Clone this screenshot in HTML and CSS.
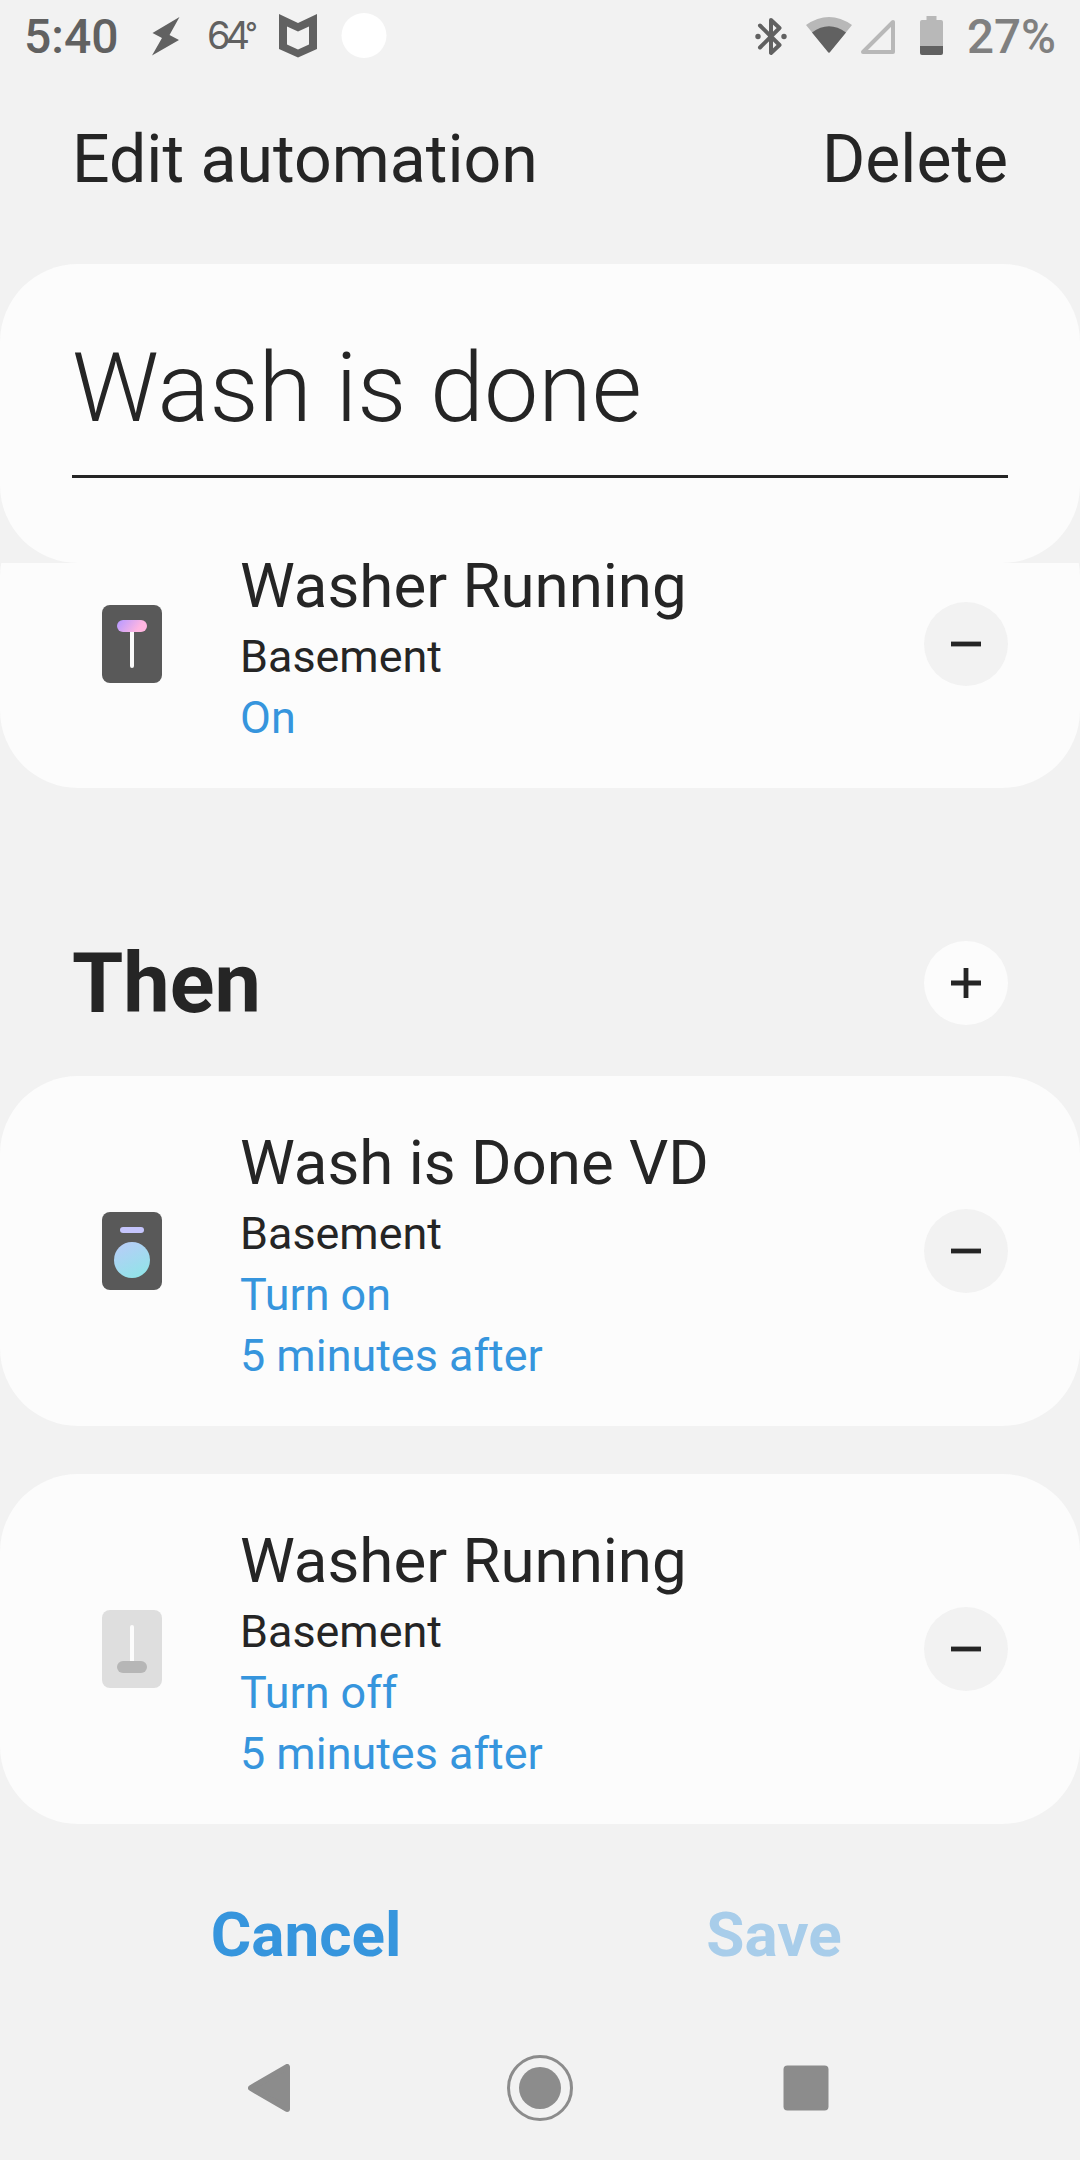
FILE: index.html
```html
<!DOCTYPE html>
<html lang="en">
<head>
    <meta charset="UTF-8">
    <meta name="viewport" content="width=device-width, initial-scale=1.0">
    <title>Edit automation</title>
    <link rel="stylesheet" href="styles.css">
</head>
<body>
    <div class="status-bar">
        <div class="status-left">
            <span class="time">5:40</span>
            <svg class="bolt" width="30" height="72" viewBox="0 0 30 72">
                <path d="M28.5 17 L1.5 33 L11 38 L1 55.500 L28 40 L18.500 35 Z" fill="#616161"/>
            </svg>
            <span class="temp">64<span class="degree">°</span></span>
            <svg class="shield" width="38" height="72" viewBox="0 0 38 72">
                <path fill-rule="evenodd" fill="#616161" d="M0 14 L19 23 L38 14 V49 L19 57.500 L0 49 Z M8 26.500 V44.500 L19 49.500 L30 44.500 V26.500 L19 31.500 Z"/>
            </svg>
            <svg class="dot" width="46" height="72" viewBox="0 0 46 72">
                <circle cx="23" cy="35.500" r="22.500" fill="#fff"/>
            </svg>
        </div>
        <div class="status-right">
            <svg class="bluetooth" width="32" height="72" viewBox="0 0 32 72">
                <path d="M5 25.500 L24.500 45 L16 53 V20 L24.500 28 L5 47.500" fill="none" stroke="#616161" stroke-width="4" stroke-linejoin="round" stroke-linecap="round"/>
                <circle cx="3" cy="36.500" r="2.700" fill="#616161"/>
                <circle cx="29" cy="36.500" r="2.700" fill="#616161"/>
            </svg>
            <svg class="wifi" width="46" height="72" viewBox="0 0 46 72">
                <path d="M0 25 Q23 9 46 25 L24 52 Q23 53.500 22 52 Z" fill="#b8b8b8"/>
                <path d="M6 32.500 Q23 20 40 32.500 L24 52 Q23 53.500 22 52 Z" fill="#616161"/>
            </svg>
            <svg class="signal" width="34" height="72" viewBox="0 0 34 72">
                <path d="M32 22 V52 H2 Z" fill="none" stroke="#b8b8b8" stroke-width="4" stroke-linejoin="round"/>
            </svg>
            <svg class="battery" width="23" height="72" viewBox="0 0 23 72">
                <path d="M6.500 16 H16.500 V20 H21 Q23 20 23 22 V46 H0 V22 Q0 20 2 20 H6.500 Z" fill="#b8b8b8"/>
                <path d="M0 46 H23 V53 Q23 55 21 55 H2 Q0 55 0 53 Z" fill="#616161"/>
            </svg>
            <span class="percent">27%</span>
        </div>
    </div>

    <header>
        <h1>Edit automation</h1>
        <a href="#">Delete</a>
    </header>

    <div class="name-card">
        <div class="name-field">Wash is done</div>
    </div>

    <main>
        <div class="card card-if">
            <svg class="device-icon" width="60" height="78" viewBox="0 0 60 78">
                <defs>
                    <linearGradient id="pink" x1="0" y1="0" x2="1" y2="0.3">
                        <stop offset="0.1" stop-color="#bd9cff"/>
                        <stop offset="0.85" stop-color="#ffb6e1"/>
                    </linearGradient>
                </defs>
                <rect width="60" height="78" rx="8" fill="#595959"/>
                <rect x="28" y="24" width="4" height="39" rx="2" fill="#fafafa"/>
                <rect x="15" y="15" width="30" height="12" rx="6" fill="url(#pink)"/>
            </svg>
            <div class="details">
                <h3>Washer Running</h3>
                <p>Basement</p>
                <p class="action">On</p>
            </div>
            <button class="round-button">
                <svg width="30" height="30" viewBox="0 0 30 30"><path d="M0 15 H30" stroke="#252525" stroke-width="4.800"/></svg>
            </button>
        </div>

        <div class="section-title">
            <h2>Then</h2>
            <button class="round-button add">
                <svg width="30" height="30" viewBox="0 0 30 30"><path d="M0 15 H30 M15 0 V30" stroke="#252525" stroke-width="4.800"/></svg>
            </button>
        </div>

        <div class="card">
            <svg class="device-icon" width="60" height="78" viewBox="0 0 60 78">
                <defs>
                    <linearGradient id="aqua" x1="0.2" y1="0" x2="0.7" y2="1">
                        <stop offset="0" stop-color="#b8cdf8"/>
                        <stop offset="1" stop-color="#91e4e8"/>
                    </linearGradient>
                </defs>
                <rect width="60" height="78" rx="8" fill="#595959"/>
                <rect x="18" y="15" width="24" height="6" rx="3" fill="#c5c5fd"/>
                <circle cx="30" cy="48" r="18" fill="url(#aqua)"/>
            </svg>
            <div class="details">
                <h3>Wash is Done VD</h3>
                <p>Basement</p>
                <p class="action">Turn on</p>
                <p class="action">5 minutes after</p>
            </div>
            <button class="round-button">
                <svg width="30" height="30" viewBox="0 0 30 30"><path d="M0 15 H30" stroke="#252525" stroke-width="4.800"/></svg>
            </button>
        </div>

        <div class="card">
            <svg class="device-icon" width="60" height="78" viewBox="0 0 60 78">
                <rect width="60" height="78" rx="8" fill="#dedede"/>
                <rect x="28" y="15" width="4" height="38" rx="2" fill="#fcfcfc"/>
                <rect x="15" y="51" width="30" height="12" rx="6" fill="#b6b6b6"/>
            </svg>
            <div class="details">
                <h3>Washer Running</h3>
                <p>Basement</p>
                <p class="action">Turn off</p>
                <p class="action">5 minutes after</p>
            </div>
            <button class="round-button">
                <svg width="30" height="30" viewBox="0 0 30 30"><path d="M0 15 H30" stroke="#252525" stroke-width="4.800"/></svg>
            </button>
        </div>
    </main>

    <footer>
        <button class="cancel">Cancel</button>
        <button class="save" disabled>Save</button>
    </footer>

    <div class="nav-bar">
        <svg width="42" height="48" viewBox="0 0 42 48">
            <path d="M39 3 V45 L3 24 Z" fill="#8c8c8c" stroke="#8c8c8c" stroke-width="6" stroke-linejoin="round"/>
        </svg>
        <svg class="home" width="66" height="66" viewBox="0 0 66 66">
            <circle cx="33" cy="33" r="31.500" fill="none" stroke="#8c8c8c" stroke-width="3"/>
            <circle cx="33" cy="33" r="21" fill="#8c8c8c"/>
        </svg>
        <svg width="46" height="46" viewBox="0 0 46 46">
            <rect x="0.500" y="0.500" width="45" height="45" rx="4" fill="#8c8c8c"/>
        </svg>
    </div>
</body>
</html>
```

FILE: styles.css
```css
* {
    box-sizing: border-box;
}
body {
    font-family: Roboto, sans-serif;
    background-color: #f2f2f2;
    color: #252525;
    margin: 0;
    padding: 0;
    width: 1080px;
    height: 2160px;
    overflow: hidden;
    display: flex;
    flex-direction: column;
}
h1, h2, h3, p {
    margin: 0;
    font-weight: 400;
}
svg {
    display: block;
    flex: none;
}
button {
    font-family: inherit;
    background: none;
    border: 0;
    padding: 0;
}

/* status bar */
.status-bar {
    height: 72px;
    display: flex;
    justify-content: space-between;
    color: #616161;
}
.status-left,
.status-right {
    display: flex;
    line-height: 74px;
}
.status-left {
    padding-left: 24px;
}
.status-right {
    padding-right: 23px;
}
.time,
.percent {
    font-size: 48px;
    font-weight: 500;
}
.time {
    width: 127px;
}
.temp {
    width: 98px;
    padding-left: 26px;
    font-family: Inter, sans-serif;
    font-size: 38px;
    font-weight: 400;
    letter-spacing: -5px;
    line-height: 70px;
    white-space: nowrap;
}
.degree {
    font-size: 27px;
    font-weight: 500;
    vertical-align: 7px;
    line-height: 1;
}
.dot {
    margin-left: 24px;
}
.wifi {
    margin-left: 19px;
}
.signal {
    margin-left: 9px;
}
.battery {
    margin-left: 25px;
}
.percent {
    width: 90px;
    margin-left: 24px;
    font-size: 47.5px;
    color: #808080;
}

/* header */
header {
    height: 192px;
    padding: 49px 72px 0;
    display: flex;
    justify-content: space-between;
    font-size: 66px;
    line-height: 78px;
}
header h1 {
    font-size: 66.2px;
}
header a {
    color: #252525;
    text-decoration: none;
}
.name-card {
    height: 299px;
    padding: 66px 72px 0;
    background: #fcfcfc;
    border-radius: 78px;
}
.name-field {
    height: 148px;
    border-bottom: 3px solid #252525;
    font-size: 97px;
    font-weight: 300;
    line-height: 116px;
}

/* conditions and actions */
main {
    height: 1289px;
    overflow: hidden;
}
.card {
    height: 350px;
    margin-bottom: 48px;
    padding: 0 72px 0 102px;
    display: flex;
    align-items: center;
    background: #fcfcfc;
    border-radius: 78px;
}
.card-if {
    height: 289px;
    margin-top: -64px;
    margin-bottom: 0;
}
.details {
    flex: 1;
    margin: 7px 0 0 78px;
    font-size: 44.9px;
    line-height: 61px;
}
.details h3 {
    font-size: 61.8px;
    line-height: 80px;
}
.action {
    color: #3695dd;
}
.round-button {
    width: 84px;
    height: 84px;
    border-radius: 50%;
    background: #f2f2f2;
    display: flex;
    align-items: center;
    justify-content: center;
}
.add {
    background: #fcfcfc;
}
.section-title {
    height: 288px;
    padding: 102px 72px 0;
    display: flex;
    align-items: center;
    justify-content: space-between;
}
.section-title h2 {
    font-size: 82.8px;
    font-weight: 700;
    line-height: 84px;
    padding-top: 1px;
}

/* bottom buttons */
footer {
    height: 164px;
    padding: 0 72px;
    display: grid;
    grid-template-columns: 1fr 1fr;
}
footer button {
    font-size: 62px;
    font-weight: 700;
    color: #3695dd;
}
footer .save {
    color: #a8cdea;
}
.nav-bar {
    height: 144px;
    padding: 0 251px 0 248px;
    display: flex;
    align-items: center;
}
.nav-bar .home {
    margin: 0 auto 0 217px;
}
```
